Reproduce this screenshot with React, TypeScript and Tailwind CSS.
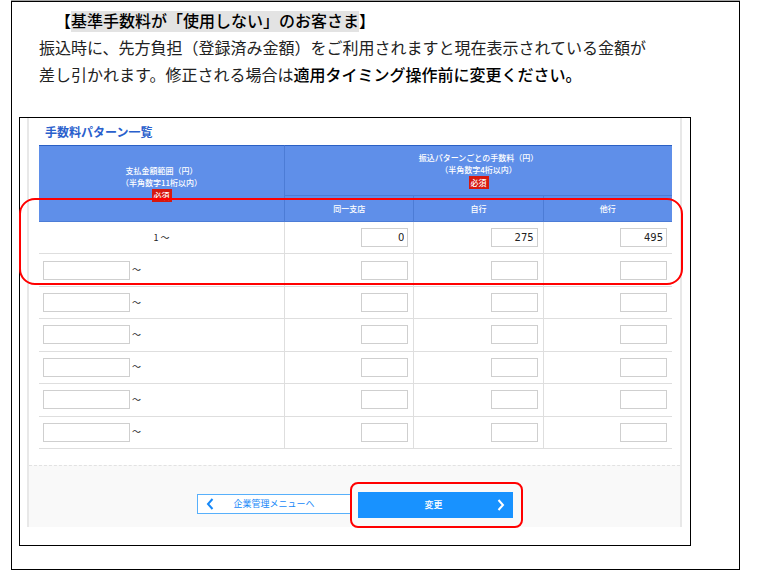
import { useState } from "react";

const feeColumns = ["同一支店", "自行", "他行"];

const initialRows = [
  { from: "1", fees: ["0", "275", "495"] },
  ...Array.from({ length: 6 }, () => ({ from: "", fees: ["", "", ""] })),
];

function RequiredBadge() {
  return (
    <span className="inline-block h-[13px] bg-[#d7190f] px-[2px] text-[8px] leading-[13px] font-medium text-white">
      必須
    </span>
  );
}

function Chevron({ left = false }: { left?: boolean }) {
  return (
    <svg viewBox="0 0 8 12" className="h-3 w-2 shrink-0" fill="none" stroke="currentColor" strokeWidth="2">
      <path d={left ? "M6.5 1 2 6l4.500 5" : "M1.500 1 6 6l-4.500 5"} />
    </svg>
  );
}

export default function App() {
  const [rows, setRows] = useState(initialRows);

  const setFrom = (row: number, value: string) => {
    setRows(rows.map((r, i) => (i === row ? { ...r, from: value } : r)));
  };

  const setFee = (row: number, col: number, value: string) => {
    setRows(rows.map((r, i) => (i === row ? { ...r, fees: r.fees.map((f, j) => (j === col ? value : f)) } : r)));
  };

  return (
    <div className="bg-white pb-1 font-['Noto_Sans_CJK_JP',sans-serif] text-[#222]">
      <main className="mr-5 ml-[11px] border-t border-[#a5a5a5]">
        <div className="border border-black pr-12 pb-[23px] pl-[7px]">
          {/* Guide text */}
          <section className="pt-[6px] pl-5 font-['Liberation_Serif','Noto_Sans_CJK_JP',serif] text-[16px] leading-[27px]">
            <h1 className="pl-4 font-medium text-black">
              【<span className="bg-[#e3e3e3] py-[2px]">基準手数料が「使用しない」のお客さま</span>】
            </h1>
            <p>
              振込時に、先方負担（登録済み金額）をご利用されますと現在表示されている金額が
              <br />
              差し引かれます。修正される場合は
              <strong className="font-medium text-black">適用タイミング操作前に変更ください。</strong>
            </p>
          </section>

          {/* Fee settings screen */}
          <form
            className="mt-7 border border-black pr-2 pb-[18px] pl-[7px]"
            onSubmit={(e) => e.preventDefault()}
          >
            <div className="border-x-2 border-[#e8e8e8]">
              <div className="pt-[5px] pr-2 pb-4 pl-[10px]">
                <h2 className="pl-[6px] text-[12px] leading-[18px] font-bold text-[#2a60cc]">手数料パターン一覧</h2>

                <div className="relative mt-1">
                  <table className="w-full table-fixed border-separate border-spacing-0">
                    <colgroup>
                      <col className="w-[245px]" />
                      <col />
                      <col />
                      <col />
                    </colgroup>
                    <thead className="bg-[#5f8fe9] text-[8px] leading-[12px] text-white">
                      <tr className="h-[51px]">
                        <th rowSpan={2} className="border-y border-t-[#2a60c4] border-b-[#4c7cd6] p-0 font-medium">
                          支払金額範囲（円）
                          <br />
                          （半角数字11桁以内）
                          <br />
                          <RequiredBadge />
                        </th>
                        <th
                          colSpan={3}
                          className="border-y border-l border-t-[#2a60c4] border-b-[#4c7cd6] border-l-[#4c7cd6] p-0 font-medium"
                        >
                          振込パターンごとの手数料（円）
                          <br />
                          （半角数字4桁以内）
                          <br />
                          <RequiredBadge />
                        </th>
                      </tr>
                      <tr className="h-[26px]">
                        {feeColumns.map((name) => (
                          <th key={name} className="border-b border-l border-[#4c7cd6] p-0 font-medium">
                            {name}
                          </th>
                        ))}
                      </tr>
                    </thead>
                    <tbody className="h-[227px] text-[10px] leading-[16px]">
                      {rows.map((row, i) => (
                        <tr key={i}>
                          <td className="border-b border-[#dedede] px-1 py-0">
                            {i === 0 ? (
                              <div className="text-center text-[9px]">{row.from} ～</div>
                            ) : (
                              <label className="flex items-center gap-[2px] text-[9px]">
                                <input
                                  type="text"
                                  aria-label={`支払金額範囲 ${i + 1}`}
                                  value={row.from}
                                  onChange={(e) => setFrom(i, e.target.value)}
                                  className="h-[19px] w-[87px] border border-[#cfcfcf] bg-white px-1"
                                />
                                ～
                              </label>
                            )}
                          </td>
                          {row.fees.map((fee, j) => (
                            <td key={j} className="border-b border-l border-[#dedede] py-0 pr-[5px] pl-1">
                              <input
                                type="text"
                                aria-label={`${feeColumns[j]} ${i + 1}`}
                                value={fee}
                                onChange={(e) => setFee(i, j, e.target.value)}
                                className="ml-auto block h-[19px] w-[47px] border border-[#cfcfcf] bg-white px-[3px] text-right font-['DejaVu_Sans',sans-serif]"
                              />
                            </td>
                          ))}
                        </tr>
                      ))}
                    </tbody>
                  </table>
                  {/* Marker around the first two rows */}
                  <div className="pointer-events-none absolute top-[53px] -right-[11px] -left-5 h-[87px] rounded-2xl border-2 border-[#f00]" />
                </div>
              </div>

              <div className="flex h-[62px] justify-center border-t border-dashed border-[#e2e2e2] bg-[#f9f9f9] pt-4 pl-[11px]">
                <button
                  type="button"
                  className="mt-3 flex h-5 w-[153px] items-center border border-r-0 border-[#58b0fb] bg-white pl-2 text-[#1688f8]"
                >
                  <Chevron left />
                  <span className="flex-1 pr-4 text-center text-[9px] leading-[16px] whitespace-nowrap">
                    企業管理メニューへ
                  </span>
                </button>
                <div className="h-[46px] w-[173px] rounded-lg border-2 border-[#f00] py-2 pr-2 pl-[6px]">
                  <button
                    type="submit"
                    className="flex h-[26px] w-full items-center bg-[#1892ff] pr-2 text-white"
                  >
                    <span className="flex-1 pl-3 text-center text-[9px] leading-[16px] font-medium">変更</span>
                    <Chevron />
                  </button>
                </div>
              </div>
            </div>
          </form>
        </div>
      </main>
    </div>
  );
}
